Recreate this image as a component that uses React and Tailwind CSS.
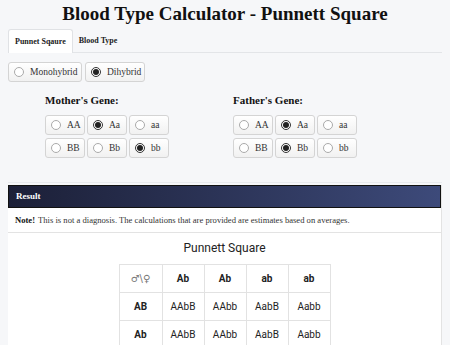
import React, { useState } from 'react';

const slab = { fontFamily: '"Liberation Serif", "DejaVu Serif", serif' };

const Radio = ({ checked }) => (
    <span className={`shrink-0 inline-flex w-[10px] h-[10px] rounded-full border items-center justify-center bg-white ${checked ? 'border-[#333]' : 'border-[#aaa]'}`}>
        {checked && <span className="w-[6px] h-[6px] rounded-full bg-[#222]" />}
    </span>
);

const Choice = ({ label, checked, onClick, className = '' }) => (
    <button
        onClick={onClick}
        className={`flex items-center gap-[6px] h-[20px] px-[5px] rounded-[3px] border border-[#d4d4d4] bg-gradient-to-b from-white to-[#f1f1f1] text-[9.5px] text-[#333] ${className}`}
    >
        <Radio checked={checked} />
        <span>{label}</span>
    </button>
);

const GenePicker = ({ title, rows, value, onChange }) => (
    <div>
        <div className="text-[11px] font-bold text-[#111] leading-[14px] mb-[8px]">{title}</div>
        <div className="flex flex-col gap-[3px]">
            {rows.map((row, i) => (
                <div key={i} className="flex gap-[2px]">
                    {row.map((g) => (
                        <Choice
                            key={g}
                            label={g}
                            checked={value[i] === g}
                            onClick={() => onChange(i, g)}
                            className="w-[40px]"
                        />
                    ))}
                </div>
            ))}
        </div>
    </div>
);

const header = ['Ab', 'Ab', 'ab', 'ab'];
const body = [
    ['AB', 'AAbB', 'AAbb', 'AabB', 'Aabb'],
    ['Ab', 'AAbB', 'AAbb', 'AabB', 'Aabb'],
];

export default function App() {
    const [mode, setMode] = useState('di');
    const [mother, setMother] = useState(['Aa', 'bb']);
    const [father, setFather] = useState(['Aa', 'Bb']);
    const geneRows = [['AA', 'Aa', 'aa'], ['BB', 'Bb', 'bb']];

    return (
        <div className="w-[450px] h-[345px] overflow-hidden bg-[#f6f7f9] text-[#222]" style={slab}>
            <h1 className="text-center text-[19px] font-bold leading-[28px] text-[#111]">
                Blood Type Calculator - Punnett Square
            </h1>

            <div className="mx-[8px] mt-[1px] flex border-b border-[#e3e5e8] h-[24px] text-[8px] font-bold">
                <div className="px-[6px] flex items-center bg-white border border-b-0 border-[#e0e2e5] rounded-t-[3px] -mb-px">
                    Punnet Sqaure
                </div>
                <div className="px-[6px] flex items-center">Blood Type</div>
            </div>

            <div className="mx-[8px] mt-[9px] flex gap-[3px]">
                <Choice label="Monohybrid" checked={mode === 'mono'} onClick={() => setMode('mono')} className="w-[74px]" />
                <Choice label="Dihybrid" checked={mode === 'di'} onClick={() => setMode('di')} className="w-[60px]" />
            </div>

            <div className="flex mt-[11px]">
                <div className="w-[233px] pl-[45px]">
                    <GenePicker
                        title="Mother's Gene:"
                        rows={geneRows}
                        value={mother}
                        onChange={(i, g) => setMother((m) => m.map((v, j) => (j === i ? g : v)))}
                    />
                </div>
                <div>
                    <GenePicker
                        title="Father's Gene:"
                        rows={geneRows}
                        value={father}
                        onChange={(i, g) => setFather((m) => m.map((v, j) => (j === i ? g : v)))}
                    />
                </div>
            </div>

            <div className="mx-[8px] mt-[24px] border-t border-[#e9ebee]" />

            <div className="mx-[8px] mt-[2px] bg-white border-r border-[#e3e3e3]">
                <div className="h-[23px] flex items-center px-[7px] border border-[#111] bg-gradient-to-r from-[#1c2038] to-[#3d4a7a] text-white text-[9px] font-bold">
                    Result
                </div>
                <div className="h-[25px] flex items-center px-[7px] border-b border-[#e3e3e3] text-[8.6px] text-[#333]">
                    <b className="mr-[3px] text-[#111]">Note!</b> This is not a diagnosis. The calculations that are provided are estimates based on averages.
                </div>
                <div className="pt-[8px] flex flex-col items-center" style={{ fontFamily: 'Roboto, "Liberation Sans", sans-serif' }}>
                    <div className="text-[12px] text-[#222] leading-[15px] mb-[8px]">Punnett Square</div>
                    <table className="border-collapse text-[10px] text-[#222]">
                        <tbody>
                            <tr>
                                <td className="w-[43px] h-[28px] border border-[#e2e2e2] text-center text-[10px] text-[#777] font-['DejaVu_Sans',sans-serif]">♂\♀</td>
                                {header.map((h, i) => (
                                    <td key={i} className="w-[42px] h-[28px] border border-[#e2e2e2] text-center font-bold">{h}</td>
                                ))}
                            </tr>
                            {body.map((r, i) => (
                                <tr key={i}>
                                    {r.map((c, j) => (
                                        <td key={j} className={`h-[28px] border border-[#e2e2e2] text-center ${j === 0 ? 'font-bold' : ''}`}>{c}</td>
                                    ))}
                                </tr>
                            ))}
                        </tbody>
                    </table>
                </div>
            </div>
        </div>
    );
}
